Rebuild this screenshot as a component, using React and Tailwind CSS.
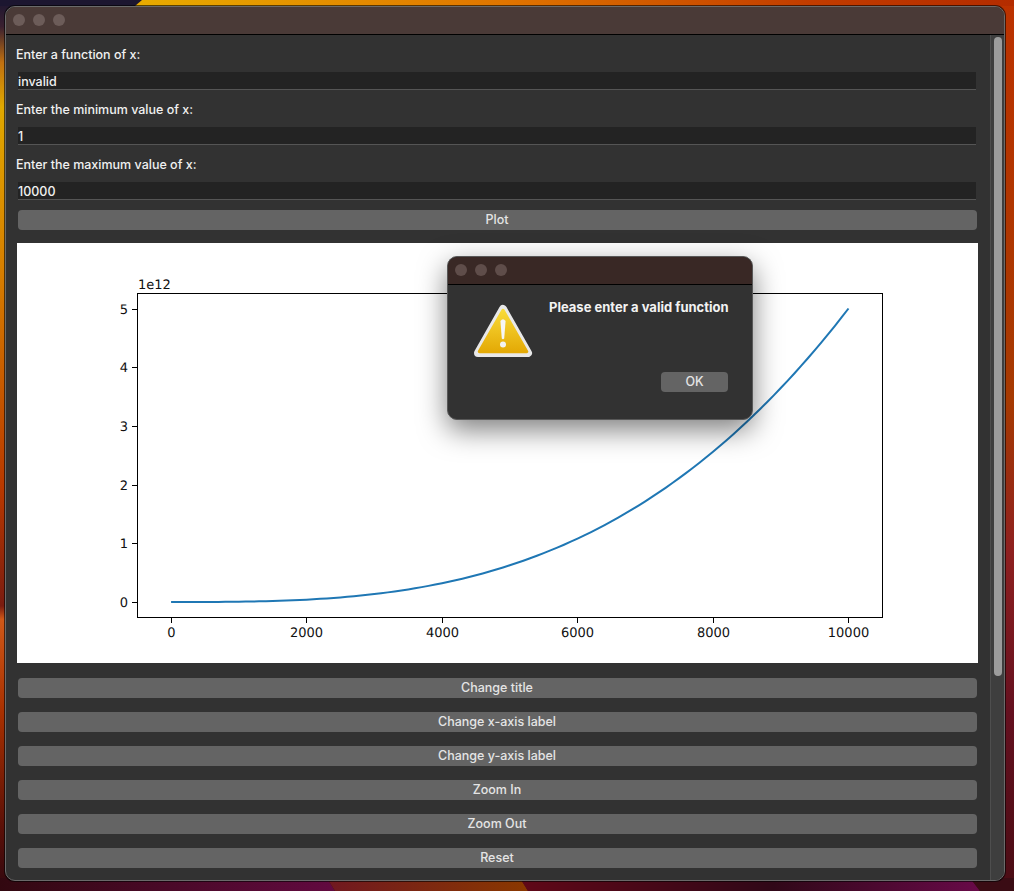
const labelFont = "font-['Inter','Liberation_Sans',sans-serif]";

const buttonsBelow = ['Change title', 'Change x-axis label', 'Change y-axis label', 'Zoom In', 'Zoom Out', 'Reset'];

const TrafficLights = ({ color }) => (
  <div className="flex items-center gap-2 pl-[7px] pb-px">
    <span className={`w-3 h-3 rounded-full ${color}`} />
    <span className={`w-3 h-3 rounded-full ${color}`} />
    <span className={`w-3 h-3 rounded-full ${color}`} />
  </div>
);

const Field = ({ label, value, first }) => (
  <div className={first ? '' : 'mt-[11px]'}>
    <div className="h-[17px] leading-[17px] text-[12.5px] text-[#f0f0f0] font-medium">{label}</div>
    <input
      readOnly
      value={value}
      className="block mt-[9px] ml-[2px] w-[958px] h-[18px] bg-[#232323] border-b border-[#555555] text-[12.5px] leading-[17px] text-[#f0f0f0] pt-px outline-none font-medium"
    />
  </div>
);

const Btn = ({ children, className = '' }) => (
  <button className={`block ml-[2px] w-[959px] h-[20px] rounded-[4px] bg-[#646464] text-[12.5px] leading-[20px] text-center text-[#e4e4e4] font-medium pr-px ${className}`}>
    {children}
  </button>
);

// wallpaper only peeks out round the window
const Wallpaper = () => (
  <svg className="absolute inset-0" width="1014" height="891">
    <defs>
      <linearGradient id="wpTop" x1="0" x2="1" y1="0" y2="0">
        <stop offset="0.13" stopColor="#e8ac00" />
        <stop offset="0.5" stopColor="#e07400" />
        <stop offset="0.8" stopColor="#c23c00" />
        <stop offset="1" stopColor="#b42c00" />
      </linearGradient>
      <linearGradient id="wpLeft" x1="0" x2="0" y1="0" y2="1">
        <stop offset="0" stopColor="#1c1630" />
        <stop offset="0.03" stopColor="#3a2030" />
        <stop offset="0.07" stopColor="#c07010" />
        <stop offset="0.12" stopColor="#e0a800" />
        <stop offset="0.3" stopColor="#d88000" />
        <stop offset="0.55" stopColor="#b83800" />
        <stop offset="0.68" stopColor="#7a1c10" />
        <stop offset="0.695" stopColor="#d05818" />
        <stop offset="0.8" stopColor="#a83000" />
        <stop offset="0.93" stopColor="#5a1008" />
        <stop offset="1" stopColor="#300810" />
      </linearGradient>
      <linearGradient id="wpRight" x1="0" x2="0" y1="0" y2="1">
        <stop offset="0" stopColor="#bc3200" />
        <stop offset="0.45" stopColor="#a63a02" />
        <stop offset="0.62" stopColor="#8e2020" />
        <stop offset="0.8" stopColor="#64101f" />
        <stop offset="1" stopColor="#4a0c14" />
      </linearGradient>
      <linearGradient id="wpBottomA" x1="0" x2="1" y1="0" y2="0">
        <stop offset="0" stopColor="#320810" />
        <stop offset="1" stopColor="#620a40" />
      </linearGradient>
      <linearGradient id="wpBottomB" x1="0" x2="1" y1="0" y2="0">
        <stop offset="0" stopColor="#701820" />
        <stop offset="1" stopColor="#8a3800" />
      </linearGradient>
      <linearGradient id="wpBottomC" x1="0" x2="1" y1="0" y2="0">
        <stop offset="0" stopColor="#600818" />
        <stop offset="0.55" stopColor="#300818" />
        <stop offset="1" stopColor="#680a48" />
      </linearGradient>
    </defs>
    <rect width="1014" height="891" fill="url(#wpLeft)" />
    <rect x="500" width="514" height="891" fill="url(#wpRight)" />
    <rect width="1014" height="6" fill="url(#wpTop)" />
    <polygon points="0,0 142,0 135,6 0,6" fill="#1c1630" />
    <polygon points="0,878 327,878 335,891 0,891" fill="url(#wpBottomA)" />
    <polygon points="327,878 520,878 528,891 335,891" fill="url(#wpBottomB)" />
    <polygon points="520,878 970,878 980,891 528,891" fill="url(#wpBottomC)" />
    <polygon points="970,878 1014,878 1014,891 980,891" fill="#3a0c14" />
  </svg>
);

const curve = Array.from({ length: 101 }, (_, i) => {
  const x = 1 + (i * 9999) / 100;
  const px = 154 + (x / 10000) * 677.5;
  const py = 359 - ((5 * x ** 3) / 5e12) * 293.5;
  return `${px.toFixed(2)},${py.toFixed(2)}`;
}).join(' ');

const Chart = () => {
  const font = "'DejaVu Sans', sans-serif";
  return (
    <div className="mt-[13px] w-[961px] h-[420px] bg-white ml-px">
      <svg width="961" height="420" className="block" textRendering="geometricPrecision">
        <polyline points={curve} fill="none" stroke="#1f77b4" strokeWidth="2" />
        <rect x="120.5" y="50.5" width="745" height="324" fill="none" stroke="#000" strokeWidth="1" />
        {[0, 2000, 4000, 6000, 8000, 10000].map((t, i) => {
          const x = Math.round(154 + i * 135.4) + 0.5;
          return (
            <g key={t}>
              <line x1={x} x2={x} y1="375" y2="380" stroke="#000" />
              <text x={x} y="394" textAnchor="middle" fontSize="13" fontFamily={font} fill="#111">{t}</text>
            </g>
          );
        })}
        {[0, 1, 2, 3, 4, 5].map(t => {
          const y = Math.round(359 - t * 58.7) + 0.5;
          return (
            <g key={t}>
              <line x1="115" x2="120" y1={y} y2={y} stroke="#000" />
              <text x="111" y={y + 4.5} textAnchor="end" fontSize="13" fontFamily={font} fill="#111">{t}</text>
            </g>
          );
        })}
        <text x="121" y="46" fontSize="13" fontFamily={font} fill="#111">1e12</text>
      </svg>
    </div>
  );
};

const WarningIcon = () => (
  <svg width="60" height="54" viewBox="0 0 60 54" className="shrink-0">
    <defs>
      <linearGradient id="warnFill" x1="0" x2="0" y1="0" y2="1">
        <stop offset="0" stopColor="#f8da38" />
        <stop offset="1" stopColor="#e4aa06" />
      </linearGradient>
    </defs>
    <polygon points="30,5 55,49 5,49" fill="#e8e8e8" stroke="#e8e8e8" strokeWidth="8" strokeLinejoin="round" />
    <polygon points="30,6.5 53.5,47.5 6.5,47.5" fill="url(#warnFill)" stroke="url(#warnFill)" strokeWidth="3.5" strokeLinejoin="round" />
    <path d="M27.4 17 Q30 13.5 32.6 17 L31.2 34.5 Q30 36 28.8 34.5 Z" fill="#f6f6f6" />
    <circle cx="30" cy="40.5" r="3" fill="#f2f2f2" />
  </svg>
);

const Dialog = () => (
  <div className="absolute left-[447px] top-[256px] w-[306px] h-[164px] flex flex-col rounded-[10px] overflow-hidden border border-[#585858] bg-[#323232] shadow-[0_10px_28px_rgba(0,0,0,0.5)]">
    <div className="h-[28px] shrink-0 flex items-center bg-[#392825] border-b border-black">
      <div className="flex items-center gap-2 ml-[7px] pb-px">
        <span className="w-3 h-3 rounded-full bg-[#5f4d4a]" />
        <span className="w-3 h-3 rounded-full bg-[#5f4d4a]" />
        <span className="w-3 h-3 rounded-full bg-[#5f4d4a]" />
      </div>
    </div>
    <div className="flex-1 flex flex-col">
      <div className="flex-1 flex pl-[25px] pt-[19px]">
        <WarningIcon />
        <p className="ml-[16px] -mt-[5px] text-[13px] leading-[16px] font-bold text-[#f2f2f2] whitespace-nowrap">Please enter a valid function</p>
      </div>
      <button className="self-end mr-[24px] mb-[27px] w-[67px] h-[20px] rounded-[4px] bg-[#646464] text-[12.5px] leading-[20px] text-[#e4e4e4] font-medium">OK</button>
    </div>
  </div>
);

export default function App() {
  return (
    <div className={`relative w-[1014px] h-[891px] overflow-hidden ${labelFont}`}>
      <Wallpaper />
      <div className="relative ml-[5px] pt-[6px]">
        <div className="w-[1000px] h-[875px] flex flex-col rounded-[10px] overflow-hidden border border-[#6a6a6a] bg-[#323232] shadow-[0_0_0_1px_rgba(0,0,0,0.6)]">
          <div className="h-[28px] shrink-0 flex items-center bg-[#4a3a37] border-b border-black">
            <TrafficLights color="bg-[#6c5c59]" />
          </div>
          <div className="flex-1 flex min-h-0">
            <div className="flex-1 pl-[10px] pt-[11px]">
              <Field first label="Enter a function of x:" value="invalid" />
              <Field label="Enter the minimum value of x:" value="1" />
              <Field label="Enter the maximum value of x:" value="10000" />
              <Btn className="mt-[10px]">Plot</Btn>
              <Chart />
              <div className="mt-[15px] flex flex-col gap-[14px]">
                {buttonsBelow.map(b => <Btn key={b}>{b}</Btn>)}
              </div>
            </div>
            <div className="w-[14px] shrink-0 bg-[#3e3e3e] border-l border-[#4e4e4e] pl-[3px] pt-[2px]">
              <div className="w-2 h-[639px] rounded-full bg-[#9c9c9c]" />
            </div>
          </div>
        </div>
      </div>
      <Dialog />
    </div>
  );
}
